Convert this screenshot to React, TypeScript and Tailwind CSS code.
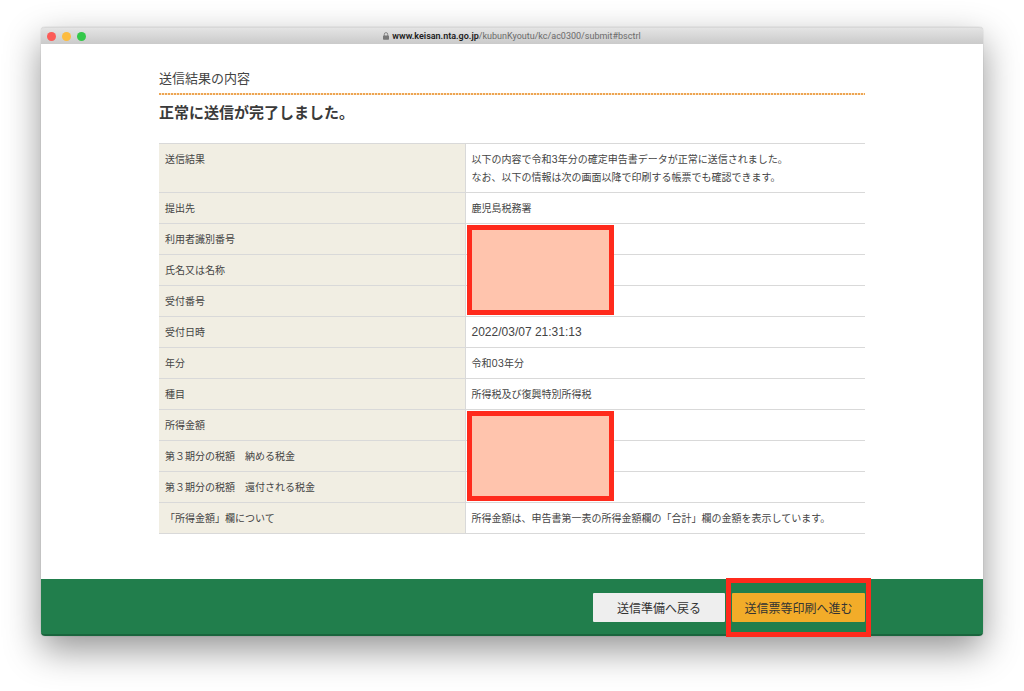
interface Row {
  label: string
  lines?: string[]
  latin?: boolean
  masked?: boolean
}

const ROWS: Row[] = [
  {
    label: '送信結果',
    lines: [
      '以下の内容で令和3年分の確定申告書データが正常に送信されました。',
      'なお、以下の情報は次の画面以降で印刷する帳票でも確認できます。',
    ],
  },
  { label: '提出先', lines: ['鹿児島税務署'] },
  { label: '利用者識別番号', masked: true },
  { label: '氏名又は名称' },
  { label: '受付番号' },
  { label: '受付日時', lines: ['2022/03/07 21:31:13'], latin: true },
  { label: '年分', lines: ['令和03年分'] },
  { label: '種目', lines: ['所得税及び復興特別所得税'] },
  { label: '所得金額', masked: true },
  { label: '第３期分の税額　納める税金' },
  { label: '第３期分の税額　還付される税金' },
  {
    label: '「所得金額」欄について',
    lines: ['所得金額は、申告書第一表の所得金額欄の「合計」欄の金額を表示しています。'],
  },
]

function LockIcon() {
  return (
    <svg viewBox="0 0 6 8" className="h-2 w-1.5" aria-hidden="true">
      <path d="M1.3 4V2.3a1.7 1.7 0 0 1 3.4 0V4" fill="none" stroke="#808080" strokeWidth="0.9" />
      <rect x="0" y="3.6" width="6" height="4.2" rx="0.7" fill="#777" />
    </svg>
  )
}

function TitleBar() {
  return (
    <div className="relative flex h-[17px] items-center justify-center rounded-t-[4px] border-t border-[#d8d8d8] bg-linear-to-b from-[#e4e4e4] to-[#cacaca]">
      <div className="absolute left-1.5 flex gap-[6px]">
        <span className="size-[9px] rounded-full bg-[#fc5b57]" />
        <span className="size-[9px] rounded-full bg-[#fdbc40]" />
        <span className="size-[9px] rounded-full bg-[#34c84a]" />
      </div>
      <div className="flex items-center gap-[3px] font-['Roboto','Liberation_Sans',sans-serif] text-[9px] leading-none text-[#6b6b6b]">
        <LockIcon />
        <span>
          <span className="font-semibold text-[#1c1c1c]">www.keisan.nta.go.jp</span>
          /kubunKyoutu/kc/ac0300/submit#bsctrl
        </span>
      </div>
    </div>
  )
}

function ResultTable() {
  return (
    <table className="w-full table-fixed border-collapse border-y border-[#d9d9d9] text-left font-['Inter','Noto_Sans_CJK_JP',sans-serif] text-[10px] leading-[18px]">
      <tbody>
        {ROWS.map((row) => (
          <tr key={row.label} className="border-b border-[#d9d9d9]">
            <th scope="row" className="w-[306px] border-r border-[#d9d9d9] bg-[#f1eee3] px-1.5 py-1.5 align-top font-normal">
              {row.label}
            </th>
            <td className="relative px-1.5 py-1.5 align-top">
              {row.lines?.map((line) => (
                <p key={line} className={row.latin ? "font-['Liberation_Sans',sans-serif] text-[12px] leading-[18px]" : ''}>
                  {line}
                </p>
              ))}
              {/* mask runs over this row and the next two */}
              {row.masked && (
                <div className="absolute top-px left-px h-[90px] w-[147px] border-[5px] border-[#ff2a1c] bg-[#ffc4ad]" />
              )}
            </td>
          </tr>
        ))}
      </tbody>
    </table>
  )
}

export default function App() {
  return (
    <div className="min-h-screen bg-white px-[41px] pt-[27px] pb-[54px] font-['Noto_Sans_CJK_JP',sans-serif] text-[#444]">
      <div className="rounded-[4px] bg-white shadow-[0_14px_36px_rgba(0,0,0,0.42),0_0_1px_rgba(0,0,0,0.4)]">
        <TitleBar />

        <main className="px-[118px] pt-6 pb-[45px]">
          <h1 className="text-[13px] leading-5">送信結果の内容</h1>
          <div className="mt-[5px] h-0.5 bg-[repeating-linear-gradient(90deg,#eda552_0_2px,#fbe6cd_2px_3px)]" />
          <h2 className="mt-[5px] mb-[19px] text-[15px] leading-6 font-bold text-[#3a3a3a]">正常に送信が完了しました。</h2>
          <ResultTable />
        </main>

        <footer className="flex justify-end gap-[7px] rounded-b-[4px] border-b-2 border-[#1a653d] bg-[#217e4c] px-[118px] pt-[14px] pb-3 text-[12px] leading-[29px] text-[#333]">
          <button type="button" className="w-[132px] rounded-[1px] bg-[#eee]">
            送信準備へ戻る
          </button>
          <div className="relative">
            <button type="button" className="w-[133px] rounded-[1px] bg-[#f2ac29]">
              送信票等印刷へ進む
            </button>
            <div className="pointer-events-none absolute -inset-x-1.5 -inset-y-[15px] border-[5px] border-[#ff2a1c]" />
          </div>
        </footer>
      </div>
    </div>
  )
}
